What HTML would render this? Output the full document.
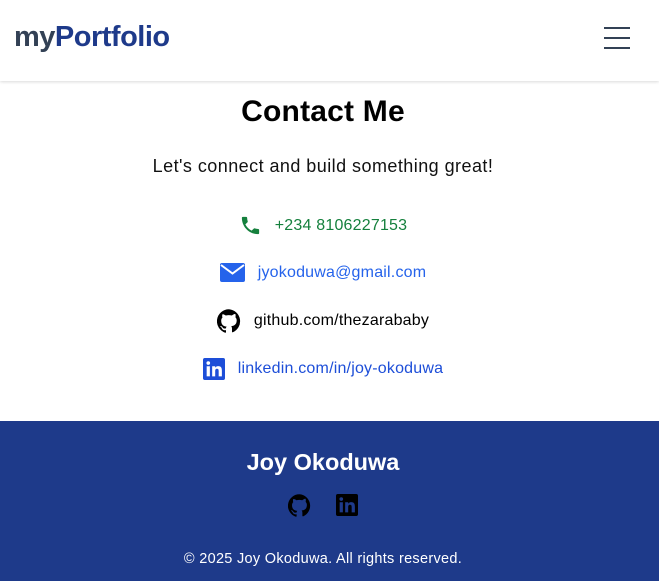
<!DOCTYPE html>
<html><head><meta charset="utf-8"><style>
*{margin:0;padding:0;box-sizing:border-box}
body{width:659px;height:581px;overflow:hidden;font-family:"Liberation Sans",Arial,sans-serif;background:#fff;position:relative}
header{position:absolute;top:0;left:0;width:659px;height:81px;background:#fff;box-shadow:0 1px 3px rgba(0,0,0,.15)}
.logo{position:absolute;left:14px;top:21px;font-size:29px;font-weight:bold;letter-spacing:-0.5px;color:#1e3a8a}
.logo span{color:#334155}
.burger{position:absolute;left:604px;top:27px;width:26px}
.burger i{display:block;height:2px;background:#334155;margin-bottom:8px}
h1{position:absolute;top:95px;width:646px;text-align:center;font-size:30px;font-weight:bold;color:#000;letter-spacing:0.2px}
.sub{position:absolute;top:156px;width:646px;text-align:center;font-size:18px;letter-spacing:0.45px;color:#111}
.row{position:absolute;width:646px;display:flex;justify-content:center;align-items:center;font-size:16px;letter-spacing:0.2px;gap:13px}
.row svg{display:block}
footer{position:absolute;top:421px;left:0;width:659px;height:160px;background:#1e3a8a;color:#fff;text-align:center}
footer h2{position:absolute;top:28px;width:646px;font-size:23.5px;font-weight:bold}
.copy{position:absolute;top:130px;width:646px;font-size:14.5px;letter-spacing:0.3px}
</style></head><body>
<header><div class="logo"><span>my</span>Portfolio</div><div class="burger"><i></i><i></i><i></i></div></header>
<h1>Contact Me</h1>
<div class="sub">Let's connect and build something great!</div>
<div class="row" style="top:214px;color:#15803d"><svg width="23" height="23" viewBox="0 0 24 24"><path fill="#15803d" d="M6.6 10.8c1.4 2.8 3.8 5.1 6.6 6.6l2.2-2.2c.3-.3.7-.4 1-.2 1.1.4 2.3.6 3.6.6.6 0 1 .4 1 1V20c0 .6-.4 1-1 1C10.6 21 3 13.4 3 4c0-.6.4-1 1-1h3.5c.6 0 1 .4 1 1 0 1.3.2 2.5.6 3.6.1.3 0 .7-.2 1L6.6 10.8z"/></svg><span>+234 8106227153</span></div>
<div class="row" style="top:263px;color:#2563eb"><svg width="25" height="19" viewBox="0 0 25 19"><rect x="0" y="0" width="25" height="19" rx="2" fill="#2563eb"/><path d="M1 2l11.5 8.5L24 2" fill="none" stroke="#fff" stroke-width="2"/></svg><span>jyokoduwa@gmail.com</span></div>
<div class="row" style="top:309px;color:#000"><svg width="24" height="24" viewBox="0 0 24 24"><path fill="#000" d="M12 .3a12 12 0 0 0-3.8 23.4c.6.1.8-.3.8-.6v-2c-3.3.7-4-1.6-4-1.6-.6-1.4-1.4-1.8-1.4-1.8-1-.7.1-.7.1-.7 1.2.1 1.8 1.2 1.8 1.2 1 1.8 2.8 1.3 3.5 1 0-.8.4-1.3.7-1.6-2.7-.3-5.5-1.3-5.5-6 0-1.2.5-2.3 1.3-3.1-.2-.4-.6-1.6 0-3.2 0 0 1-.3 3.3 1.2a11.5 11.5 0 0 1 6 0C17.3 4.6 18.3 5 18.3 5c.6 1.6.2 2.8.1 3.2.8.8 1.3 1.9 1.3 3.1 0 4.6-2.8 5.6-5.5 5.9.4.4.8 1.1.8 2.2v3.3c0 .3.2.7.8.6A12 12 0 0 0 12 .3"/></svg><span>github.com/thezarababy</span></div>
<div class="row" style="top:358px;color:#1d4ed8"><svg width="22" height="22" viewBox="0 0 24 24"><rect width="24" height="24" rx="2" fill="#1d4ed8"/><rect x="4" y="9" width="3.5" height="11" fill="#fff"/><circle cx="5.75" cy="5.5" r="2" fill="#fff"/><path fill="#fff" d="M10 9h3.3v1.6c.5-.9 1.6-1.8 3.3-1.8 3.4 0 4 2.2 4 5.1V20h-3.5v-5.4c0-1.3 0-2.9-1.8-2.9s-2 1.4-2 2.8V20H10z"/></svg><span>linkedin.com/in/joy-okoduwa</span></div>
<footer><h2>Joy Okoduwa</h2>
<svg style="position:absolute;left:288px;top:73px" width="23" height="23" viewBox="0 0 24 24"><path fill="#000" d="M12 .3a12 12 0 0 0-3.8 23.4c.6.1.8-.3.8-.6v-2c-3.3.7-4-1.6-4-1.6-.6-1.4-1.4-1.8-1.4-1.8-1-.7.1-.7.1-.7 1.2.1 1.8 1.2 1.8 1.2 1 1.8 2.8 1.3 3.5 1 0-.8.4-1.3.7-1.6-2.7-.3-5.5-1.3-5.5-6 0-1.2.5-2.3 1.3-3.1-.2-.4-.6-1.6 0-3.2 0 0 1-.3 3.3 1.2a11.5 11.5 0 0 1 6 0C17.3 4.6 18.3 5 18.3 5c.6 1.6.2 2.8.1 3.2.8.8 1.3 1.9 1.3 3.1 0 4.6-2.8 5.6-5.5 5.9.4.4.8 1.1.8 2.2v3.3c0 .3.2.7.8.6A12 12 0 0 0 12 .3"/></svg>
<svg style="position:absolute;left:336px;top:73px" width="22" height="22" viewBox="0 0 24 24"><rect width="24" height="24" rx="2" fill="#000"/><rect x="4" y="9" width="3.5" height="11" fill="#1e3a8a"/><circle cx="5.75" cy="5.5" r="2" fill="#1e3a8a"/><path fill="#1e3a8a" d="M10 9h3.3v1.6c.5-.9 1.6-1.8 3.3-1.8 3.4 0 4 2.2 4 5.1V20h-3.5v-5.4c0-1.3 0-2.9-1.8-2.9s-2 1.4-2 2.8V20H10z"/></svg>
<div class="copy">© 2025 Joy Okoduwa. All rights reserved.</div></footer>
</body></html>
